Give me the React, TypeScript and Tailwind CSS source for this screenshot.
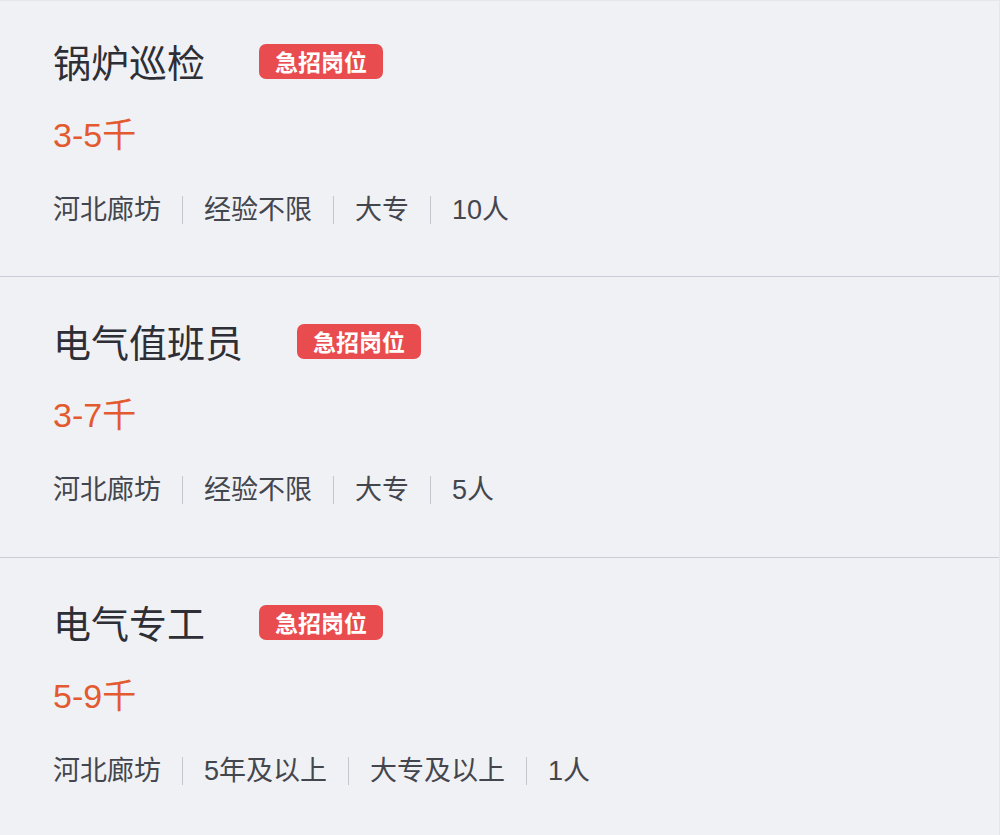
import React from "react";

type Job = { title: string; salary: string; meta: string[] };

const jobs: Job[] = [
  { title: "锅炉巡检", salary: "3-5千", meta: ["河北廊坊", "经验不限", "大专", "10人"] },
  { title: "电气值班员", salary: "3-7千", meta: ["河北廊坊", "经验不限", "大专", "5人"] },
  { title: "电气专工", salary: "5-9千", meta: ["河北廊坊", "5年及以上", "大专及以上", "1人"] },
];

const cjk = { fontFamily: '"Noto Sans CJK SC", "Noto Sans", sans-serif' };
const mixed = { fontFamily: '"Liberation Sans", "Noto Sans CJK SC", sans-serif' };

function Card({ job, first, last }: { job: Job; first: boolean; last: boolean }) {
  return (
    <div
      className={
        "flex flex-col pl-[53px] " +
        (first ? "h-[276px] pt-[36px] border-b border-[#c9ccd4]" : last ? "flex-1 pt-[40px]" : "h-[281px] pt-[40px] border-b border-[#c9ccd4]")
      }
    >
      <div className="flex items-center h-[48px]">
        <span className="text-[38px] leading-[48px] text-[#2e2f36]" style={cjk}>{job.title}</span>
        <span
          className="ml-[54px] h-[35px] px-[16px] rounded-[7px] bg-[#e94c4e] text-white text-[23px] leading-[35px] font-bold"
          style={cjk}
        >
          急招岗位
        </span>
      </div>
      <div className="mt-[30px] h-[40px] text-[34px] leading-[40px] text-[#e35a2f]" style={mixed}>{job.salary}</div>
      <div className="mt-[37px] flex items-center h-[36px] text-[27px] leading-[36px] text-[#44464d]" style={mixed}>
        {job.meta.map((m, i) => (
          <React.Fragment key={i}>
            {i > 0 && <span className="mx-[21px] w-px h-[28px] bg-[#c4c7ce]" />}
            <span>{m}</span>
          </React.Fragment>
        ))}
      </div>
    </div>
  );
}

export default function App() {
  return (
    <div className="w-[1000px] h-[835px] bg-[#f0f1f4] flex flex-col border-t border-[#e4e6ea] border-r">
      {jobs.map((j, i) => (
        <Card key={i} job={j} first={i === 0} last={i === jobs.length - 1} />
      ))}
    </div>
  );
}
